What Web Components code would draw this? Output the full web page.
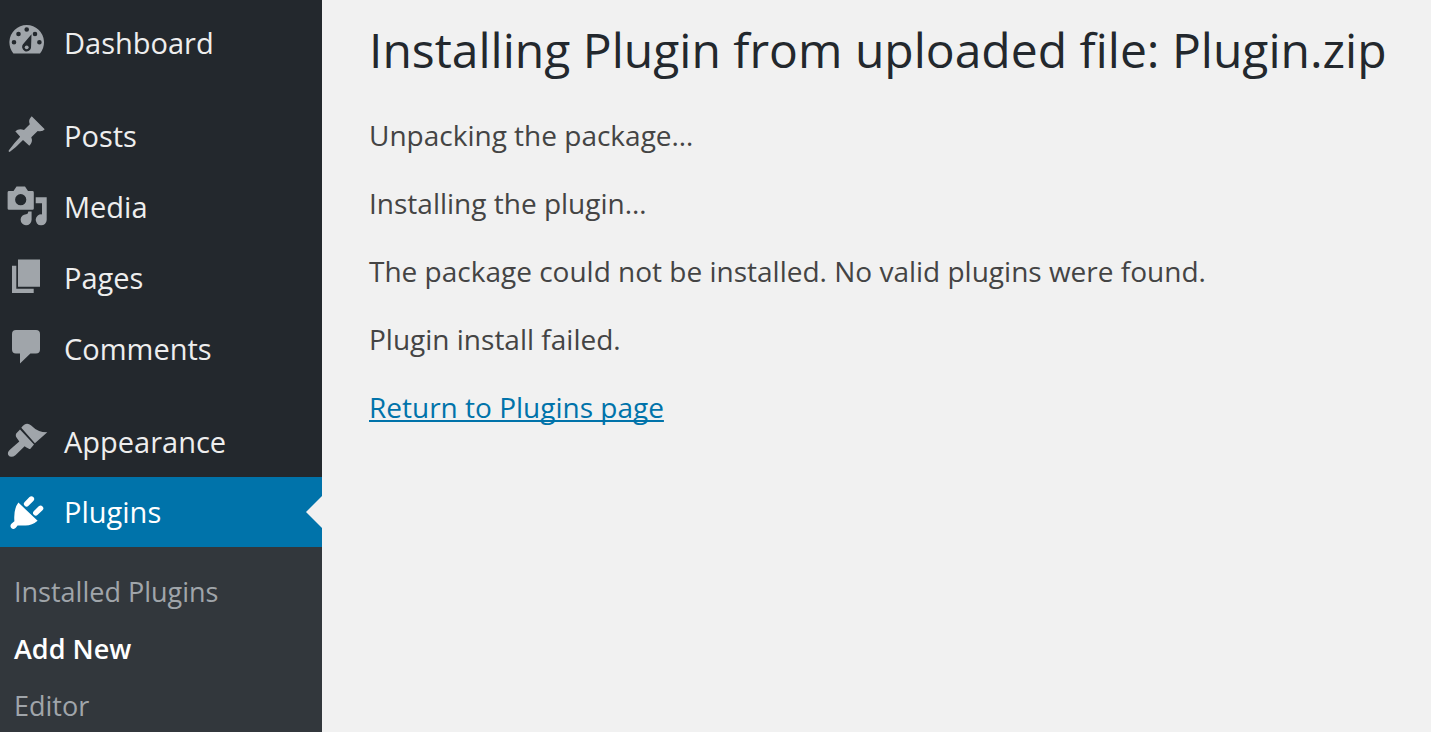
<!DOCTYPE html>
<html lang="en">
<head>
<meta charset="utf-8">
<title>Installing Plugin</title>
<style>
  body { margin: 0; background: #f1f1f1; color: #444; font-family: "Open Sans", sans-serif; }
</style>
</head>
<body>
<admin-shell>
  <admin-menu slot="menu">
    <menu-item icon="dashboard">Dashboard</menu-item>
    <menu-item icon="posts" section>Posts</menu-item>
    <menu-item icon="media">Media</menu-item>
    <menu-item icon="pages">Pages</menu-item>
    <menu-item icon="comments">Comments</menu-item>
    <menu-item icon="appearance" section>Appearance</menu-item>
    <menu-item icon="plugins" current>Plugins</menu-item>
    <sub-menu>
      <sub-item>Installed Plugins</sub-item>
      <sub-item current>Add New</sub-item>
      <sub-item>Editor</sub-item>
    </sub-menu>
  </admin-menu>
  <install-log heading="Installing Plugin from uploaded file: Plugin.zip">
    <log-line>Unpacking the package…</log-line>
    <log-line>Installing the plugin…</log-line>
    <log-line>The package could not be installed. No valid plugins were found.</log-line>
    <log-line>Plugin install failed.</log-line>
    <log-line href="#plugins">Return to Plugins page</log-line>
  </install-log>
</admin-shell>

<script>
const ICONS = {
  dashboard: `<path fill-rule="evenodd" d="M6.4 31.4A17.3 17.3 0 1 1 33 31.4ZM19.7 5.2a2.3 2.3 0 1 0 0 4.6a2.3 2.3 0 1 0 0-4.6ZM11.5 9.7a2.3 2.3 0 1 0 0 4.6a2.3 2.3 0 1 0 0-4.6ZM28 9.7a2.3 2.3 0 1 0 0 4.6a2.3 2.3 0 1 0 0-4.6ZM7 18a2.3 2.3 0 1 0 0 4.6a2.3 2.3 0 1 0 0-4.6ZM32.4 18a2.3 2.3 0 1 0 0 4.6a2.3 2.3 0 1 0 0-4.6ZM24.5 12.2L24 26A4.5 4.5 0 1 1 16.2 22Z"/><circle cx="19.7" cy="25.3" r="1.9"/>`,
  posts: `<path d="M24.7 1.3L37.7 14.3Q36 16.8 30.7 16L24.3 22.3Q26.2 27 22.3 30.7L16 25Q9 32.5 2.6 37Q1.2 37 1.7 35.6Q7 28 13.2 21.7L8.3 16.2Q12 13 17 15L22.8 9.2Q20.8 5 24.7 1.3Z"/>`,
  media: `<path fill-rule="evenodd" d="M2 5H6.5L9.5.4H18L21 5H25.4Q26.8 5 26.8 6.4V22.4Q26.8 23.8 25.4 23.8H2Q.6 23.8.6 22.4V6.4Q.6 5 2 5ZM13.7 8.1a5.6 5.6 0 1 0 0 11.2a5.6 5.6 0 1 0 0-11.2Z"/><path d="M28.7 11.3H39.7V34A5.5 5.5 0 1 1 35 28.4V17.2H28.7Z"/><path d="M24.6 25.6V33.8A5.5 5.5 0 1 1 19.2 28.2Q21.3 28.2 21.3 25.6Z"/>`,
  pages: `<path d="M11 2.4H33V29.8H11ZM5 8.7H9.3V31.7H26.7V36H5Z"/>`,
  comments: `<path d="M9 2H29Q33 2 33 6V21.4Q33 25.4 29 25.4H23.4L13 35.6V25.4H9Q5 25.4 5 21.4V6Q5 2 9 2Z"/>`,
  appearance: `<path d="M14.3 6.8Q19 .2 24.2 4.4Q31 11.4 40.3 11.3L27.9 22.2Z"/><path d="M13 8.4L27 23.6L23.2 28Q21.6 28 17.6 25.2L8.4 34.2Q4 37.6 1.2 34Q0 31 3.4 28.2L12.3 20.4L9 15.8Q8.4 14 9.2 12.6Z"/>`,
  plugins: `<path d="M11.4 10.6L30.6 28.8Q25 33.8 18 33.6Q12 33.4 10.6 33.6L8.8 35.8A3 3 0 1 1 4.7 31.5L7.4 29.2Q6.4 17 11.4 10.6Z"/><path d="M19.6 11.8L24.4 7M28.8 20.9L33.6 16.3" fill="none" stroke="currentColor" stroke-width="5.4" stroke-linecap="round"/>`
};

function define(name, render) {
  customElements.define(name, class extends HTMLElement {
    connectedCallback() {
      if (this.shadowRoot) return;
      this.attachShadow({ mode: "open" }).innerHTML = render(this);
    }
  });
}

define("admin-shell", () => `
  <style>
    :host { display: flex; min-height: 100vh; }
    main { flex: 1; min-width: 0; }
    ::slotted(admin-menu) { flex: none; width: 322px; }
  </style>
  <slot name="menu"></slot>
  <main><slot></slot></main>`);

define("admin-menu", () => `
  <style>
    :host { display: block; background: #23282d; }
    nav { display: flex; flex-direction: column; min-height: 100%; padding-top: 7px; box-sizing: border-box; }
    ::slotted(sub-menu) { flex: 1; }
  </style>
  <nav aria-label="Main menu"><slot></slot></nav>`);

define("menu-item", el => `
  <style>
    :host { display: block; color: #eee; font-size: 29px; line-height: 70px; }
    :host([section]) { margin-top: 22px; }
    a { position: relative; display: flex; align-items: center; gap: 16px; height: 71px; padding-left: 7px; color: inherit; text-decoration: none; }
    svg { flex: none; width: 41px; height: 41px; color: #a0a5aa; fill: currentColor; }
    :host([current]) a { height: 70px; background: #0073aa; color: #fff; }
    :host([current]) svg { color: #fff; }
    :host([current]) a::after { content: ""; position: absolute; right: 0; top: 50%; margin-top: -16px; border: 16px solid transparent; border-left-width: 0; border-right-color: #f1f1f1; }
  </style>
  <a href="#${el.getAttribute("icon")}"><svg viewBox="0 0 41 41" aria-hidden="true">${ICONS[el.getAttribute("icon")]}</svg><span><slot></slot></span></a>`);

define("sub-menu", () => `
  <style>
    :host { display: block; padding-top: 16px; background: #32373c; }
  </style>
  <slot></slot>`);

define("sub-item", () => `
  <style>
    :host { display: block; font-size: 27px; line-height: 57px; color: #a0a5aa; }
    a { display: block; padding-left: 14px; color: inherit; text-decoration: none; }
    :host([current]) { color: #fff; font-weight: 600; }
  </style>
  <a href="#"><slot></slot></a>`);

define("install-log", el => `
  <style>
    :host { display: block; padding: 16px 0 0 47px; }
    h1 { margin: 0 0 17px; color: #23282d; font-size: 48px; line-height: 68px; font-weight: 400; }
  </style>
  <h1>${el.getAttribute("heading")}</h1>
  <slot></slot>`);

define("log-line", el => {
  const href = el.getAttribute("href");
  return `
  <style>
    :host { display: block; font-size: 28px; line-height: 68px; }
    p { margin: 0; }
    a { color: #0073aa; text-decoration-skip-ink: none; }
  </style>
  <p>${href ? `<a href="${href}"><slot></slot></a>` : "<slot></slot>"}</p>`;
});
</script>
</body>
</html>
